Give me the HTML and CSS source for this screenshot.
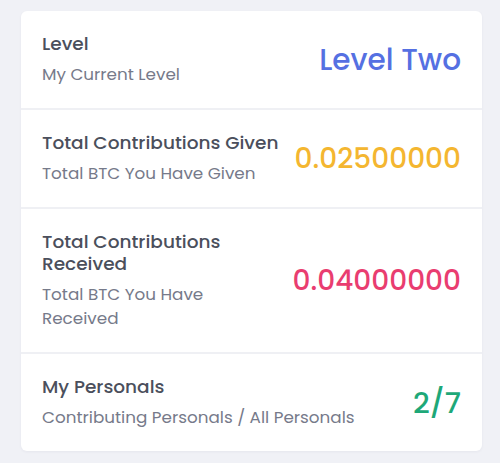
FILE: index.html
```html
<!DOCTYPE html>
<html lang="en">
<head>
<meta charset="utf-8">
<title>Stats</title>
<link rel="stylesheet" href="styles.css">
</head>
<body>
<div class="page">
  <div class="card">
    <div class="row">
      <div class="info">
        <div class="title">Level</div>
        <div class="sub">My Current Level</div>
      </div>
      <div class="value blue lg">Level Two</div>
    </div>
    <div class="row">
      <div class="info">
        <div class="title">Total Contributions Given</div>
        <div class="sub">Total BTC You Have Given</div>
      </div>
      <div class="value yellow">0.02500000</div>
    </div>
    <div class="row">
      <div class="info">
        <div class="title">Total Contributions Received</div>
        <div class="sub">Total BTC You Have Received</div>
      </div>
      <div class="value pink">0.04000000</div>
    </div>
    <div class="row">
      <div class="info">
        <div class="title">My Personals</div>
        <div class="sub">Contributing Personals / All Personals</div>
      </div>
      <div class="value green bold">2/7</div>
    </div>
  </div>
</div>
</body>
</html>
```
FILE: styles.css
```css
* { box-sizing: border-box; }
html, body { margin: 0; padding: 0; }
body {
  background: #f0f1f6;
  font-family: Poppins, "Open Sans", sans-serif;
  width: 500px;
  height: 463px;
  overflow: hidden;
}
.page {
  padding: 11px 18px 0 21px;
}
.card {
  background: #ffffff;
  border-radius: 6px;
  box-shadow: 0 1px 3px rgba(40, 45, 80, 0.05);
  overflow: hidden;
}
.row {
  display: flex;
  align-items: center;
  justify-content: space-between;
  padding: 22px 21px 22px 21px;
  border-top: 2px solid #eff0f4;
}
.row:first-child { border-top: none; }
.info {
  flex: 1;
  min-width: 0;
}
.title {
  font-size: 18.5px;
  font-weight: 500;
  color: #4b4f5c;
  line-height: 22px;
}
.sub {
  margin-top: 7px;
  font-size: 16.8px;
  color: #767a8a;
  line-height: 24px;
}
.value {
  flex-shrink: 0;
  margin-left: 16px;
  font-size: 28px;
  font-weight: 500;
  line-height: 36px;
}
.value.lg { font-size: 29.5px; }
.value.bold { font-size: 29px; font-weight: 500; }
.blue { color: #5570e2; }
.yellow { color: #f4b630; }
.pink { color: #e93d70; }
.green { color: #1ea878; }
```
